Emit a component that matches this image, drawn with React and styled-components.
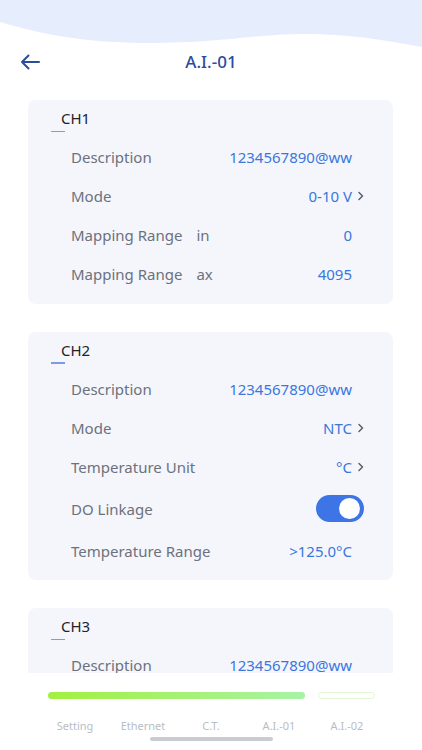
import React from 'react';
import styled, { createGlobalStyle } from 'styled-components';

const GlobalStyle = createGlobalStyle`
  * { box-sizing: border-box; }
  html, body { margin: 0; padding: 0; background: #ffffff; }
  body { font-family: "Noto Sans", "Open Sans", sans-serif; }
`;

// Page shell
const Screen = styled.div`
  width: 422px;
  height: 750px;
  display: flex;
  flex-direction: column;
  background: #ffffff;
  overflow: hidden;
`;

const Wave = styled.svg`
  display: block;
  width: 422px;
  height: 48px;
  flex-shrink: 0;
`;

const TopBar = styled.div`
  height: 28px;
  display: grid;
  grid-template-columns: 60px 1fr 60px;
  align-items: center;
  flex-shrink: 0;
`;

const BackButton = styled.button`
  border: 0;
  background: none;
  padding: 0 0 0 20px;
  display: flex;
  align-items: center;
  cursor: pointer;
`;

const Title = styled.h1`
  margin: 0;
  text-align: center;
  font-size: 17px;
  font-weight: 500;
  color: #2c4c9c;
  line-height: 28px;
`;

const Scroller = styled.div`
  flex: 1;
  overflow: hidden;
  padding: 24px 29px 0 28px;
  display: flex;
  flex-direction: column;
  gap: 28px;
`;

// Channel card
const Card = styled.section`
  background: #f4f6fc;
  border-radius: 8px;
  padding: 8px 28px 10px 0;
  flex-shrink: 0;
`;

const CardTitle = styled.div`
  position: relative;
  padding-left: 33px;
  margin-bottom: 9.5px;
  font-size: 15px;
  line-height: 20px;
  color: #1f2329;
  &::after{
    content: "";
    position: absolute;
    left: 23px;
    bottom: -4px;
    width: 14px;
    height: 1.5px;
    background: #7c9de3;
  }
`;

const Row = styled.div`
  height: ${props => props.tall ? '45px' : '39px'};
  display: flex;
  align-items: center;
  justify-content: space-between;
  padding-left: 43px;
  font-size: 15px;
`;

const Label = styled.span`
  color: #6d717c;
  white-space: nowrap;
`;

const Suffix = styled.span`
  margin-left: 14px;
`;

const ValueBox = styled.span`
  display: flex;
  align-items: center;
  color: #3b76dc;
  padding-right: ${props => props.arrow ? '0' : '13px'};
`;

const Chevron = styled.svg`
  width: 13px;
  height: 14px;
  display: block;
`;

const Toggle = styled.span`
  width: 48px;
  height: 27px;
  margin-right: 1px;
  border-radius: 14px;
  background: #3d74e6;
  display: flex;
  align-items: center;
  justify-content: flex-end;
  padding-right: 4px;
  &::after{
    content: "";
    width: 21px;
    height: 21px;
    border-radius: 50%;
    background: #ffffff;
  }
`;

// Bottom navigation
const BottomNav = styled.nav`
  height: 77px;
  flex-shrink: 0;
  background: #ffffff;
  padding-top: 19px;
  display: flex;
  flex-direction: column;
  align-items: center;
`;

const Progress = styled.div`
  width: 327px;
  display: flex;
  gap: 13px;
`;

const ProgressFill = styled.div`
  flex: ${props => props.grow};
  height: 7px;
  border-radius: 4px;
  background: ${props => props.filled
    ? 'linear-gradient(90deg, #a2f040 0%, #a7f3a6 100%)'
    : '#ffffff'};
  border: ${props => props.filled ? '0' : '1px solid #e2f6d4'};
`;

const Tabs = styled.div`
  width: 340px;
  margin-top: 20px;
  display: grid;
  grid-template-columns: repeat(5, 1fr);
`;

const Tab = styled.span`
  text-align: center;
  font-size: 11px;
  line-height: 14px;
  color: #b9bdc5;
`;

const HomeIndicator = styled.div`
  width: 123px;
  height: 4px;
  border-radius: 2px;
  background: #c9ccd3;
  margin-top: 4px;
`;

const Arrow = () => (
  <Chevron viewBox="0 0 13 14">
    <path d="M7 3.5 L10.5 7 L7 10.5" fill="none" stroke="#5b5f68" strokeWidth="1.5" strokeLinecap="round" strokeLinejoin="round" />
  </Chevron>
);

const Value = ({ children, arrow }) => (
  <ValueBox arrow={arrow}>
    {children}
    {arrow && <Arrow />}
  </ValueBox>
);

const channels = [
  {
    name: 'CH1',
    rows: [
      { label: 'Description', value: '1234567890@ww' },
      { label: 'Mode', value: '0-10 V', arrow: true },
      { label: 'Mapping Range', suffix: 'in', value: '0' },
      { label: 'Mapping Range', suffix: 'ax', value: '4095' },
    ],
  },
  {
    name: 'CH2',
    rows: [
      { label: 'Description', value: '1234567890@ww' },
      { label: 'Mode', value: 'NTC', arrow: true },
      { label: 'Temperature Unit', value: '°C', arrow: true },
      { label: 'DO Linkage', toggle: true },
      { label: 'Temperature Range', value: '>125.0°C' },
    ],
  },
  {
    name: 'CH3',
    rows: [
      { label: 'Description', value: '1234567890@ww' },
    ],
  },
];

const tabs = ['Setting', 'Ethernet', 'C.T.', 'A.I.-01', 'A.I.-02'];

export default function App() {
  return (
    <Screen>
      <GlobalStyle />
      <Wave viewBox="0 0 422 48" preserveAspectRatio="none">
        <path d="M0 0 L422 0 L422 47 C392 42 362 35 310 34 C262 33 222 43 150 43 C82 43 42 34 0 22 Z" fill="#e6eefd" />
      </Wave>
      <TopBar>
        <BackButton aria-label="back">
          <svg width="20" height="16" viewBox="0 0 20 16">
            <path d="M19 8 H2 M8.5 1.5 L2 8 L8.5 14.5" fill="none" stroke="#2c4c9c" strokeWidth="2" strokeLinecap="round" strokeLinejoin="round" />
          </svg>
        </BackButton>
        <Title>A.I.-01</Title>
        <span />
      </TopBar>

      <Scroller>
        {channels.map(ch => (
          <Card key={ch.name}>
            <CardTitle>{ch.name}</CardTitle>
            {ch.rows.map((r, i) => (
              <Row key={i} tall={r.toggle}>
                <Label>
                  {r.label}
                  {r.suffix && <Suffix>{r.suffix}</Suffix>}
                </Label>
                {r.toggle ? <Toggle /> : <Value arrow={r.arrow}>{r.value}</Value>}
              </Row>
            ))}
          </Card>
        ))}
      </Scroller>

      <BottomNav>
        <Progress>
          <ProgressFill filled grow={259} />
          <ProgressFill grow={55} />
        </Progress>
        <Tabs>
          {tabs.map(t => <Tab key={t}>{t}</Tab>)}
        </Tabs>
        <HomeIndicator />
      </BottomNav>
    </Screen>
  );
}
